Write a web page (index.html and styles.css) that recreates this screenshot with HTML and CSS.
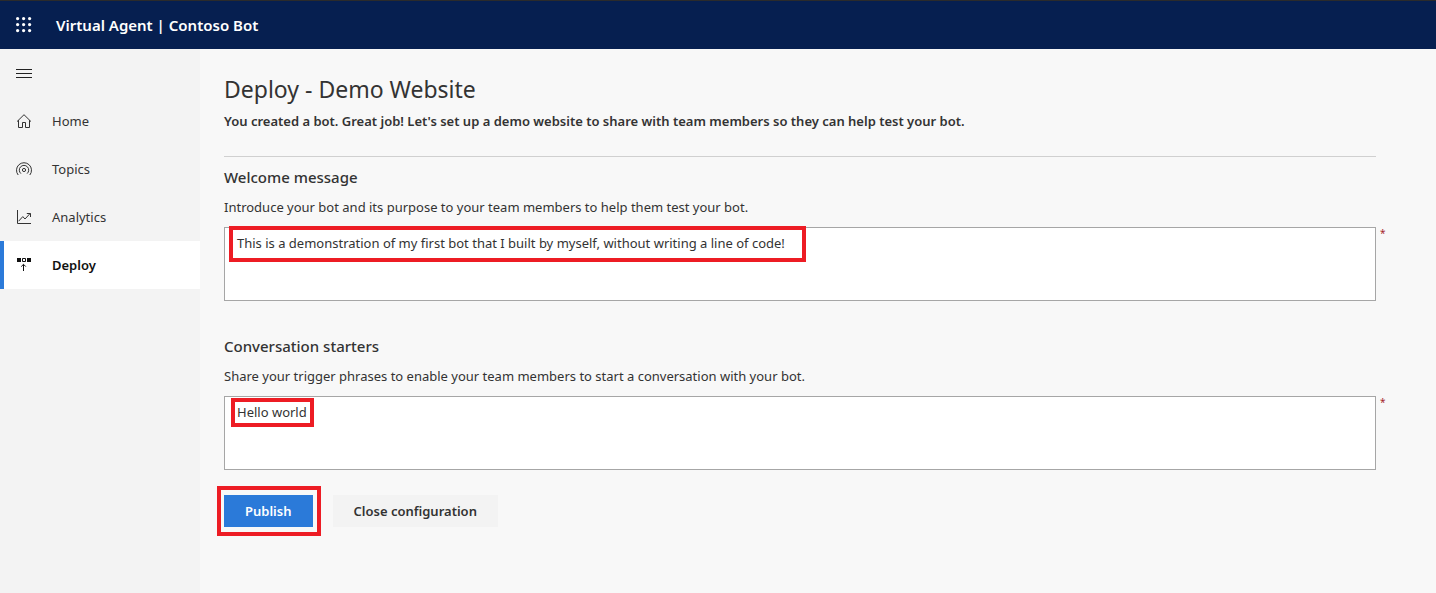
FILE: index.html
```html
<!DOCTYPE html>
<html lang="en">
<head>
<meta charset="utf-8">
<title>Virtual Agent | Contoso Bot</title>
<link rel="stylesheet" href="styles.css">
</head>
<body>
<header class="topbar">
  <button class="icon-button" type="button" aria-label="App launcher">
    <svg width="16" height="16" viewBox="0 0 16 16" fill="#fff" aria-hidden="true">
      <circle cx="1.6" cy="1.6" r="1.6"/><circle cx="7.6" cy="1.6" r="1.6"/><circle cx="13.6" cy="1.6" r="1.6"/>
      <circle cx="1.6" cy="7.6" r="1.6"/><circle cx="7.6" cy="7.6" r="1.6"/><circle cx="13.6" cy="7.6" r="1.6"/>
      <circle cx="1.6" cy="13.6" r="1.6"/><circle cx="7.6" cy="13.6" r="1.6"/><circle cx="13.6" cy="13.6" r="1.6"/>
    </svg>
  </button>
  <span class="brand">Virtual Agent | Contoso Bot</span>
</header>
<div class="shell">
  <nav class="sidebar" aria-label="Main">
    <button class="icon-button" type="button" aria-label="Toggle navigation">
      <svg width="16" height="16" viewBox="0 0 16 16" stroke="#222" aria-hidden="true"><path d="M0 4.5h16M0 8.5h16M0 12.5h16"/></svg>
    </button>
    <a class="nav-item" href="#home">
      <svg width="16" height="16" viewBox="0 0 16 16" fill="none" stroke="#333" aria-hidden="true"><path d="M1 8.6 8 1.7l7 6.9M2.5 7.2v7.3h4v-5h3v5h4V7.2"/></svg>
      <span>Home</span>
    </a>
    <a class="nav-item" href="#topics">
      <svg width="16" height="16" viewBox="0 0 16 16" fill="none" stroke="#333" aria-hidden="true"><circle cx="8" cy="9" r="1.6"/><path d="M4.9 12.6a4.7 4.7 0 1 1 6.2 0M2.2 14a7.5 7.5 0 1 1 11.6 0"/></svg>
      <span>Topics</span>
    </a>
    <a class="nav-item" href="#analytics">
      <svg width="16" height="16" viewBox="0 0 16 16" fill="none" stroke="#333" aria-hidden="true"><path d="M1.5 1v13.5H15M2.6 12.2l4.2-4.6 2.2 2.4 5.2-5.6M10.8 4.5h3.7V8"/></svg>
      <span>Analytics</span>
    </a>
    <a class="nav-item nav-item-active" href="#deploy" aria-current="page">
      <svg width="16" height="16" viewBox="0 0 16 16" fill="none" stroke="#111" aria-hidden="true"><path d="M1 1h4v4H1zM11 1h4v4h-4z" fill="#111" stroke="none"/><path d="M6.5 1.5h3v3h-3zM7.5 14V7.5M5.2 9.6l2.3-2.3 2.3 2.3"/></svg>
      <span>Deploy</span>
    </a>
  </nav>
  <main class="content">
    <h1 class="title">Deploy - Demo Website</h1>
    <p class="lead">You created a bot. Great job! Let's set up a demo website to share with team members so they can help test your bot.</p>
    <form class="form">
      <section class="section">
        <h2 class="section-title"><label for="welcome">Welcome message</label></h2>
        <p class="hint" id="welcome-hint">Introduce your bot and its purpose to your team members to help them test your bot.</p>
        <div class="field">
          <textarea class="input" id="welcome" aria-describedby="welcome-hint" required>This is a demonstration of my first bot that I built by myself, without writing a line of code!</textarea>
          <span class="required" aria-hidden="true">*</span>
          <span class="mark mark-welcome"></span>
        </div>
      </section>
      <section class="section">
        <h2 class="section-title"><label for="starters">Conversation starters</label></h2>
        <p class="hint" id="starters-hint">Share your trigger phrases to enable your team members to start a conversation with your bot.</p>
        <div class="field">
          <textarea class="input" id="starters" aria-describedby="starters-hint" required>Hello world</textarea>
          <span class="required" aria-hidden="true">*</span>
          <span class="mark mark-starters"></span>
        </div>
      </section>
      <div class="actions">
        <div class="publish">
          <button class="button button-primary" type="button">Publish</button>
          <span class="mark mark-publish"></span>
        </div>
        <button class="button" type="button">Close configuration</button>
      </div>
    </form>
  </main>
</div>
</body>
</html>
```
FILE: styles.css
```css
* { box-sizing: border-box; }

body {
  margin: 0;
  min-height: 100vh;
  display: flex;
  flex-direction: column;
  background: #f8f8f8;
  color: #333;
  font: 13px/20px "Segoe UI", "Noto Sans", "Open Sans", sans-serif;
}

h1, h2, p { margin: 0; }
svg { display: block; flex: none; }

.topbar {
  display: flex;
  align-items: center;
  height: 49px;
  border-top: 1px solid #2b2b2b;
  background: #061f50;
  color: #fff;
}

.icon-button {
  display: flex;
  align-items: center;
  justify-content: center;
  width: 48px;
  height: 48px;
  padding: 0;
  border: 0;
  background: transparent;
}

.brand {
  margin-left: 8px;
  font-size: 15px;
  font-weight: 600;
}

.shell { display: flex; flex: 1; }

.sidebar {
  flex: none;
  width: 200px;
  background: #f3f3f3;
}

.nav-item {
  display: flex;
  align-items: center;
  gap: 20px;
  height: 48px;
  padding-left: 16px;
  color: #333;
  text-decoration: none;
}

.nav-item-active {
  padding-left: 12px;
  border-left: 4px solid #2b7ad9;
  background: #fff;
  color: #111;
  font-weight: 600;
}

.content {
  flex: 1;
  min-width: 0;
  padding: 24px 60px 24px 24px;
}

.title {
  font-size: 23px;
  line-height: 32px;
  font-weight: 400;
}

.lead {
  margin-top: 6px;
  font-weight: 600;
}

.form {
  margin-top: 25px;
  border-top: 1px solid #d0d0d0;
}

.section { margin-top: 10px; }
.section + .section { margin-top: 35px; }

.section-title {
  font-size: 15px;
  line-height: 20px;
  font-weight: 500;
}

.hint { margin-top: 10px; }

.field {
  position: relative;
  margin-top: 10px;
}

.input {
  display: block;
  width: 100%;
  height: 74px;
  padding: 5px 12px;
  border: 1px solid #a6a6a6;
  border-radius: 0;
  background: #fff;
  color: #333;
  font: inherit;
  resize: none;
}

.required {
  position: absolute;
  top: 0;
  left: 100%;
  padding-left: 4px;
  color: #a4262c;
  font-size: 10px;
  line-height: 12px;
}

.mark {
  position: absolute;
  border: 4px solid #ed1c24;
  pointer-events: none;
}

.mark-welcome { top: -1px; left: 5px; width: 577px; height: 36px; }
.mark-starters { top: 2px; left: 7px; width: 83px; height: 29px; }
.mark-publish { inset: -9px -8px -9px -7px; }

.actions {
  display: flex;
  gap: 20px;
  margin-top: 25px;
}

.publish { position: relative; }

.button {
  height: 32px;
  padding: 0 21px;
  border: 0;
  background: #f3f3f3;
  color: #333;
  font: inherit;
  font-weight: 600;
}

.button-primary {
  background: #2b7ad9;
  color: #fff;
}
```
